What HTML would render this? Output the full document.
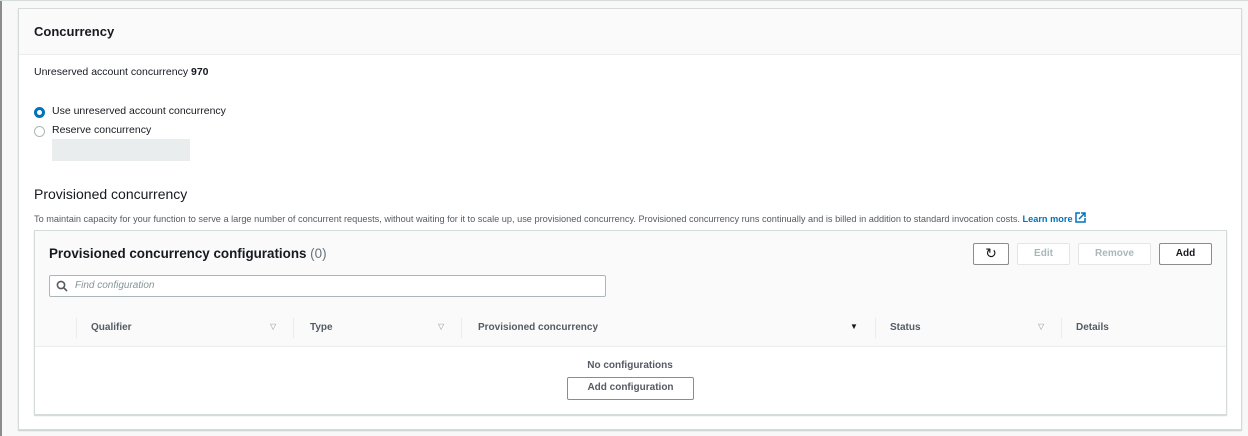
<!DOCTYPE html><html><head><style>
*{box-sizing:border-box;margin:0;padding:0}
body{width:1248px;height:436px;background:#f8f8f8;font-family:"Liberation Sans",sans-serif;color:#16191f;position:relative;overflow:hidden}
.a{position:absolute;white-space:nowrap}
.btn{position:absolute;height:22px;border:1px solid #8c8c8c;background:#fff;font-size:10px;font-weight:bold;text-align:center;line-height:20px;border-radius:2px}
.dis{border-color:#e5e5e5;color:#aab7b8}
.th{position:absolute;top:322px;font-size:10px;font-weight:bold;color:#545b64}
.tri{position:absolute;top:322px;font-size:8px;color:#879596}
.sep{position:absolute;top:318px;width:1px;height:20px;background:#eaeded}
</style></head><body>
<div class="a" style="left:0;top:0;width:2px;height:436px;background:#8c8c8c"></div>
<div class="a" style="left:0;top:0;width:1248px;height:1px;background:#d5dbdb"></div>
<div class="a" style="left:18px;top:8px;width:1224px;height:422px;background:#fff;border:1px solid #d5dbdb;box-shadow:0 1px 1px rgba(0,28,36,.2)"></div>
<div class="a" style="left:19px;top:9px;width:1222px;height:46px;background:#fafafa;border-bottom:1px solid #eaeded"></div>
<div class="a" style="left:34px;top:24px;font-size:13px;font-weight:bold">Concurrency</div>
<div class="a" style="left:34px;top:66px;font-size:10.5px">Unreserved account concurrency <b>970</b></div>
<div class="a" style="left:34px;top:107px;width:11px;height:11px;border-radius:50%;border:3.5px solid #0073bb;background:#fff"></div>
<div class="a" style="left:52px;top:105px;font-size:10.5px">Use unreserved account concurrency</div>
<div class="a" style="left:34px;top:126px;width:11px;height:11px;border-radius:50%;border:1px solid #aab7b8"></div>
<div class="a" style="left:52px;top:124px;font-size:10.5px">Reserve concurrency</div>
<div class="a" style="left:52px;top:139px;width:138px;height:22px;background:#eaeded"></div>
<div class="a" style="left:34px;top:186px;font-size:14px">Provisioned concurrency</div>
<div class="a" style="left:34px;top:212px;font-size:9.2px;color:#545b64">To maintain capacity for your function to serve a large number of concurrent requests, without waiting for it to scale up, use provisioned concurrency. Provisioned concurrency runs continually and is billed in addition to standard invocation costs. <b style="color:#0073bb">Learn more</b> <svg width="11" height="11" viewBox="0 0 11 11" style="vertical-align:-1px"><path d="M5 1H1V10H10V6" fill="none" stroke="#0073bb" stroke-width="1.5"/><path d="M4 7L10 1M6 1H10V5" fill="none" stroke="#0073bb" stroke-width="1.5"/></svg></div>
<div class="a" style="left:34px;top:230px;width:1193px;height:185px;background:#fff;border:1px solid #d5dbdb;box-shadow:0 1px 1px rgba(0,28,36,.2)"></div>
<div class="a" style="left:35px;top:231px;width:1191px;height:116px;background:#fafafa;border-bottom:1px solid #eaeded"></div>
<div class="a" style="left:49px;top:246px;font-size:13.4px;font-weight:bold">Provisioned concurrency configurations <span style="font-weight:normal;color:#687078">(0)</span></div>
<div class="btn" style="left:973px;top:243px;width:36px;font-size:14px;font-weight:normal;line-height:19px">&#8635;</div>
<div class="btn dis" style="left:1017px;top:243px;width:53px">Edit</div>
<div class="btn dis" style="left:1078px;top:243px;width:73px">Remove</div>
<div class="btn" style="left:1159px;top:243px;width:53px">Add</div>
<div class="a" style="left:49px;top:275px;width:557px;height:22px;background:#fff;border:1px solid #aab7b8;border-radius:2px"></div>
<svg class="a" style="left:56px;top:280px" width="12" height="12" viewBox="0 0 12 12"><circle cx="5" cy="5" r="3.6" fill="none" stroke="#545b64" stroke-width="1.6"/><path d="M7.6 7.6L11 11" stroke="#545b64" stroke-width="1.6"/></svg>
<div class="a" style="left:75px;top:280px;font-size:10px;font-style:italic;color:#879596">Find configuration</div>
<div class="sep" style="left:76px"></div>
<div class="th" style="left:91px">Qualifier</div><div class="tri" style="left:270px">&#9661;</div>
<div class="sep" style="left:293px"></div>
<div class="th" style="left:310px">Type</div><div class="tri" style="left:438px">&#9661;</div>
<div class="sep" style="left:461px"></div>
<div class="th" style="left:478px">Provisioned concurrency</div><div class="tri" style="left:850px;color:#16191f">&#9660;</div>
<div class="sep" style="left:875px"></div>
<div class="th" style="left:890px">Status</div><div class="tri" style="left:1038px">&#9661;</div>
<div class="sep" style="left:1061px"></div>
<div class="th" style="left:1076px">Details</div>
<div class="a" style="left:530px;top:360px;width:200px;text-align:center;font-size:10px;font-weight:bold;color:#545b64">No configurations</div>
<div class="btn" style="left:567px;top:377px;width:127px;height:23px;color:#545b64">Add configuration</div>
</body></html>
